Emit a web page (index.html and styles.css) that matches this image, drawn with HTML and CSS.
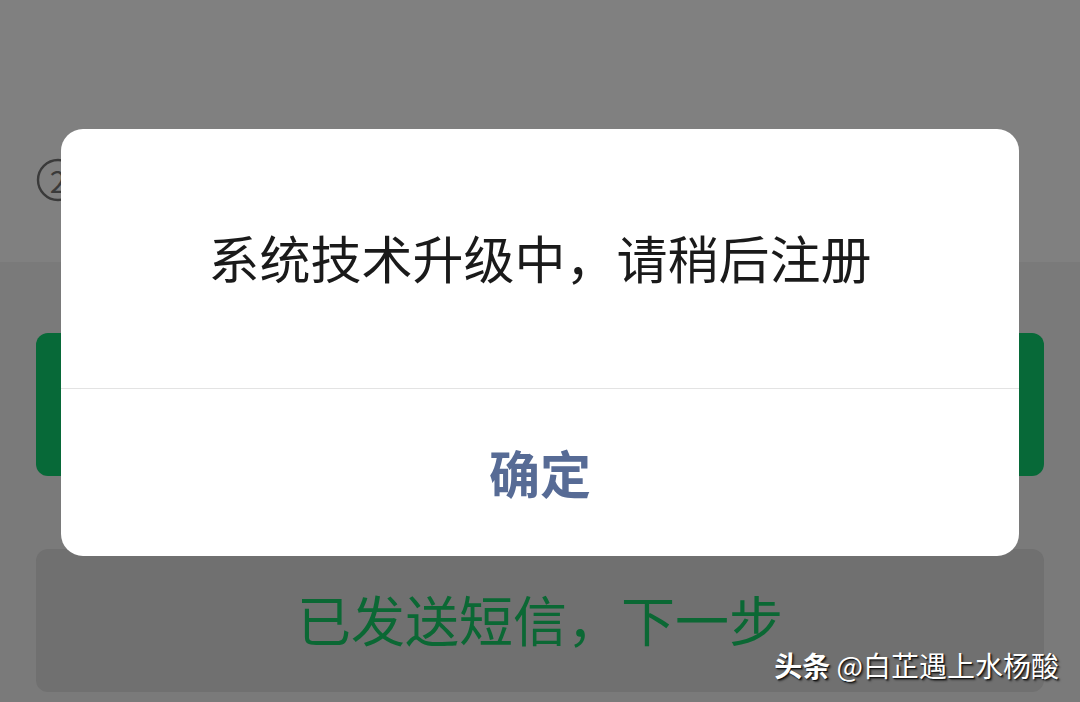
FILE: index.html
```html
<!DOCTYPE html>
<html lang="zh-CN">
<head>
<meta charset="utf-8">
<title>注册</title>
<link rel="stylesheet" href="styles.css">
</head>
<body>
<div class="page">
  <div class="top">
    <div class="step">
      <svg width="44" height="44" viewBox="0 0 44 44"><circle cx="22" cy="22" r="20" fill="none" stroke="#3a3a3a" stroke-width="2.4"/></svg>
      <span class="step-num">2</span>
    </div>
  </div>
  <div class="content">
    <div class="btn btn-green"></div>
    <div class="btn btn-gray">已发送短信，下一步</div>
  </div>
</div>

<div class="dialog">
  <div class="dialog-body">系统技术升级中，请稍后注册</div>
  <div class="dialog-foot">确定</div>
</div>

<div class="watermark"><b>头条</b> @白芷遇上水杨酸</div>
</body>
</html>
```

FILE: styles.css
```css
html, body {
  margin: 0;
  padding: 0;
}
body {
  width: 1080px;
  height: 702px;
  overflow: hidden;
  position: relative;
  background: #7a7a7a;
  font-family: "Noto Sans CJK SC", "Noto Sans", sans-serif;
}
.page {
  display: flex;
  flex-direction: column;
}
.top {
  height: 262px;
  background: #808080;
  display: flex;
  align-items: flex-start;
  padding: 158px 0 0 36px;
  box-sizing: border-box;
}
.step {
  position: relative;
  width: 44px;
  height: 44px;
}
.step svg {
  display: block;
}
.step-num {
  position: absolute;
  left: 0;
  top: 0;
  width: 44px;
  height: 44px;
  line-height: 44px;
  text-align: center;
  font-size: 30px;
  color: #3a3a3a;
}
.content {
  display: flex;
  flex-direction: column;
  gap: 73px;
  padding: 71px 36px 0;
}
.btn {
  height: 143px;
  border-radius: 12px;
  display: flex;
  align-items: center;
  justify-content: center;
}
.btn-green {
  background: #076938;
}
.btn-gray {
  background: #707070;
  color: #0b6834;
  font-size: 54px;
  padding-bottom: 4px;
  box-sizing: border-box;
}
.dialog {
  position: absolute;
  left: 61px;
  top: 129px;
  width: 958px;
  height: 427px;
  background: #ffffff;
  border-radius: 22px;
  display: flex;
  flex-direction: column;
  overflow: hidden;
}
.dialog-body {
  height: 260px;
  border-bottom: 1px solid #e3e3e3;
  display: flex;
  align-items: center;
  justify-content: center;
  font-size: 51px;
  color: #1a1a1a;
  padding-bottom: 4px;
  box-sizing: border-box;
}
.dialog-foot {
  flex: 1;
  display: flex;
  align-items: center;
  justify-content: center;
  font-size: 51px;
  font-weight: bold;
  color: #576b95;
  padding-bottom: 2px;
}
.watermark {
  position: absolute;
  right: 21px;
  top: 645px;
  font-size: 28px;
  color: #ffffff;
  text-shadow: 1px 1px 1px #111, 2px 2px 2px rgba(0,0,0,0.5);
  white-space: nowrap;
}
.watermark b {
  font-weight: bold;
}
```
